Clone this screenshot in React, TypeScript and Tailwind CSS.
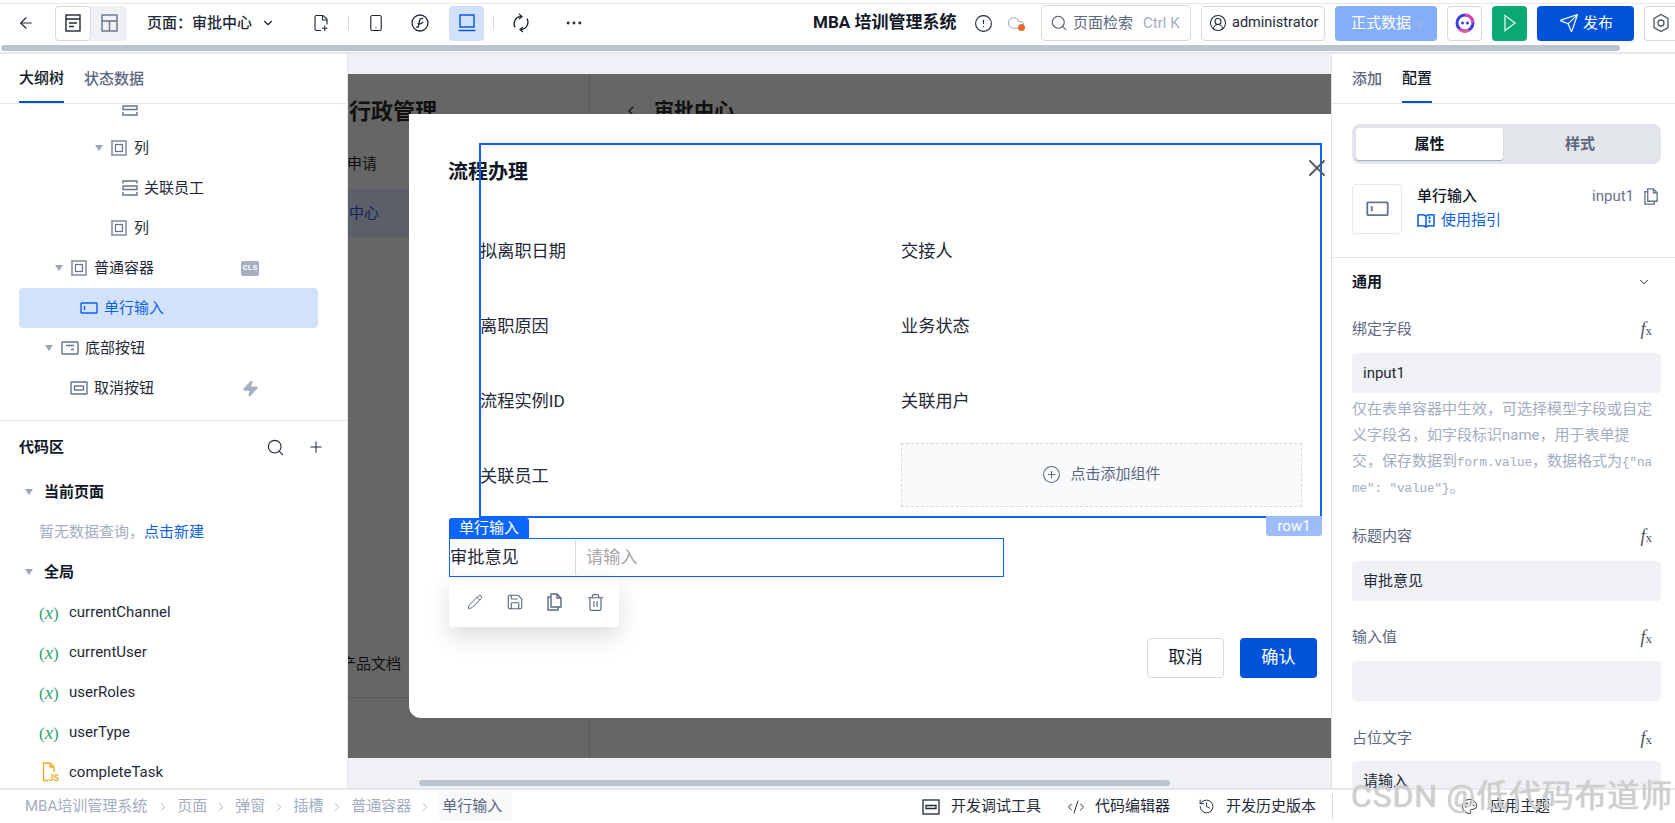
import type { ReactNode } from "react";
import {
  ArrowLeft,
  ChevronDown,
  ChevronRight,
  ChevronLeft,
  CircleAlert,
  CirclePlus,
  CircleUserRound,
  Cloud,
  CodeXml,
  Ellipsis,
  FilePlus2,
  History,
  Palette,
  Pencil,
  Plus,
  Save,
  Search,
  Send,
  Smartphone,
  Trash2,
  X,
  Zap,
} from "lucide-react";

const Caret = () => (
  <svg width="8" height="6" viewBox="0 0 8 6" className="mr-[8px] shrink-0">
    <path d="M0 0h8L4 6z" fill="#9aa5b8" />
  </svg>
);

const ColIcon = () => (
  <svg width="16" height="16" viewBox="0 0 16 16" fill="none" className="shrink-0">
    <rect x="1" y="1" width="14" height="14" stroke="#8592a8" strokeWidth="1.6" />
    <rect x="4.5" y="4.5" width="7" height="7" stroke="#66738c" strokeWidth="1.2" />
  </svg>
);

const TitleIcon = () => (
  <svg width="16" height="16" viewBox="0 0 16 16" fill="none" stroke="#66738c" strokeWidth="1.4" className="shrink-0">
    <path d="M1 3.5V1h14v2.5M1 6h14v3.5H1zM1 12v3h14v-3" />
  </svg>
);

const InputIcon = ({ color = "#66738c", size = 18 }: { color?: string; size?: number }) => (
  <svg width={size} height={size * 0.67} viewBox="0 0 18 12" fill="none" stroke={color} strokeWidth="1.4" className="shrink-0">
    <rect x="1" y="1" width="16" height="10" rx="0.5" />
    <path d="M4.5 4v4" />
  </svg>
);

const FooterIcon = () => (
  <svg width="18" height="14" viewBox="0 0 18 14" fill="none" stroke="#66738c" strokeWidth="1.4" className="shrink-0">
    <rect x="1" y="1" width="16" height="12" rx="0.5" />
    <path d="M5 4.5h8M10 8.5h3" />
  </svg>
);

const ButtonIcon = () => (
  <svg width="18" height="14" viewBox="0 0 18 14" fill="none" stroke="#66738c" strokeWidth="1.4" className="shrink-0">
    <rect x="1" y="1" width="16" height="12" rx="0.5" />
    <rect x="4.5" y="5" width="9" height="4" />
  </svg>
);

const FxMark = () => (
  <span className="font-['Liberation_Serif'] text-[18px] leading-none text-[#4b5563] italic">
    f<span className="text-[13px] not-italic">x</span>
  </span>
);

const VarMark = () => (
  <span className="w-[20px] shrink-0 font-['Liberation_Serif'] text-[17px] leading-none whitespace-nowrap text-[#2ba471]">
    (<span className="text-[19px] italic">x</span>)
  </span>
);

const FileCopy = ({ size = 18, color = "#66738c" }: { size?: number; color?: string }) => (
  <svg width={size} height={size} viewBox="0 0 18 18" fill="none" stroke={color} strokeWidth="1.4">
    <path d="M5 1h6l4 4v9H5zM11 1v4h4M5 4H2v13h10v-3" />
  </svg>
);

const TreeRow = ({ className, children, badge }: { className: string; children: ReactNode; badge?: ReactNode }) => (
  <div className={`flex h-10 w-[299px] items-center rounded-[4px] ${className}`}>
    {children}
    {badge && <span className="mr-[59px] ml-auto flex">{badge}</span>}
  </div>
);

const FieldLabel = ({ text }: { text: string }) => (
  <div className="flex h-10 items-center justify-between pr-[9px] text-[15px] text-[#5b6880]">
    <span>{text}</span>
    <FxMark />
  </div>
);

const Field = ({ children, className }: { children?: ReactNode; className: string }) => (
  <div className={`flex h-10 items-center rounded-[4px] bg-[#f0f1f5] px-[11px] text-[15px] text-[#1f2937] ${className}`}>{children}</div>
);

const Crumb = ({ text, dark }: { text: string; dark?: boolean }) => (
  <span className={dark ? "flex h-[29px] items-center bg-[#f7f8fa] pr-[10px] pl-[3px] text-[#5b6880]" : "text-[#a2adbf]"}>{text}</span>
);

const Sep = () => <ChevronRight size={14} strokeWidth={1.4} className="mx-[7px] shrink-0 text-[#a2adbf]" />;

const App = () => {
  return (
    <div className="relative flex h-[823px] w-[1675px] flex-col overflow-hidden bg-white font-['Roboto','Noto_Sans_CJK_SC',sans-serif] text-[15px] text-[#1f2937]">
      {/* 상단 툴바 */}
      <header className="h-[54px] shrink-0 border-b-2 border-[#e6e8ec] pt-[3px]">
        <div className="flex h-[39px] items-center border-t border-[#e6e8ec]">
          <ArrowLeft size={18} strokeWidth={1.5} className="ml-[17px] shrink-0" />
          <div className="ml-[20px] flex h-[35px] w-[72px] shrink-0 rounded-[4px] bg-[#f0f1f5]">
            <div className="flex w-[36px] items-center justify-center rounded-[4px] border border-[#d5d9e0] bg-white">
              <svg width="16" height="18" viewBox="0 0 16 18" fill="none" stroke="#1f2937" strokeWidth="1.4">
                <rect x="1" y="1" width="14" height="16" />
                <path d="M1 5h14M4 9h8M4 12.5h5" />
              </svg>
            </div>
            <div className="flex flex-1 items-center justify-center">
              <svg width="17" height="18" viewBox="0 0 17 18" fill="none" stroke="#66738c" strokeWidth="1.4">
                <rect x="1" y="1" width="15" height="16" />
                <path d="M1 7h15M8.5 7v10" />
              </svg>
            </div>
          </div>
          <span className="ml-[20px] w-[105px] shrink-0 font-medium whitespace-nowrap">页面：审批中心</span>
          <ChevronDown size={14} className="ml-[9px] shrink-0" />
          <FilePlus2 size={18} strokeWidth={1.5} className="ml-[37px] shrink-0" />
          <span className="ml-[18px] h-[14px] w-px shrink-0 bg-[#d5d9e0]" />
          <Smartphone size={18} strokeWidth={1.5} className="ml-[18px] shrink-0" />
          <svg width="18" height="18" viewBox="0 0 18 18" fill="none" stroke="#1f2937" strokeWidth="1.3" className="ml-[26px] shrink-0">
            <circle cx="9" cy="9" r="8" />
            <path d="M12 5c-2-1.500-3.200 0-3.500 2L7.500 12c-.3 1.500-1.500 1.500-2.200.8M6.500 9.500c2 .8 5 .2 5.500-1.800" />
          </svg>
          <div className="ml-[20px] flex h-[35px] w-[35px] shrink-0 items-center justify-center rounded-[4px] bg-[#d2e2fb]">
            <svg width="18" height="18" viewBox="0 0 18 18" fill="none" stroke="#0052d9" strokeWidth="1.4">
              <rect x="2" y="1" width="14" height="12" />
              <path d="M0.500 16.500h17" />
            </svg>
          </div>
          <span className="ml-[9px] h-[14px] w-px shrink-0 bg-[#d5d9e0]" />
          <svg width="18" height="20" viewBox="0 0 18 20" fill="none" stroke="#1f2937" strokeWidth="1.3" className="ml-[18px] shrink-0">
            <path d="M3 14.500C.8 10.500 2.500 4 9 3.500M15 5.500c2.200 4 .5 10.500-6 11" />
            <path d="M7 1l3 2.500L7 6M11 14l-3 2.500 3 2.500" />
          </svg>
          <Ellipsis size={20} strokeWidth={1.5} className="ml-[34px] shrink-0" />
          <div className="flex-1" />
          <span className="w-[146px] shrink-0 text-[17px] font-bold whitespace-nowrap text-[#111827]">MBA 培训管理系统</span>
          <CircleAlert size={19} strokeWidth={1.4} className="ml-[15px] shrink-0" />
          <span className="relative ml-[14px] shrink-0">
            <Cloud size={18} strokeWidth={1.4} className="text-[#a2adbf]" />
            <span className="absolute right-0 bottom-[1px] h-[7px] w-[7px] rounded-full bg-[#e8692a]" />
          </span>
          <div className="ml-[16px] flex h-[36px] w-[150px] shrink-0 items-center rounded-[4px] border border-[#d5d9e0] pl-[8px]">
            <Search size={18} strokeWidth={1.4} className="text-[#4b5563]" />
            <span className="ml-[5px] whitespace-nowrap text-[#5b6880]">页面检索</span>
            <span className="ml-[10px] whitespace-nowrap text-[#a2adbf]">Ctrl K</span>
          </div>
          <div className="ml-[10px] flex h-[35px] w-[124px] shrink-0 items-center rounded-[4px] border border-[#d5d9e0] pl-[7px]">
            <CircleUserRound size={18} strokeWidth={1.4} />
            <span className="ml-[5px] text-[14.5px] whitespace-nowrap">administrator</span>
          </div>
          <div className="ml-[10px] flex h-[35px] w-[102px] shrink-0 items-center rounded-[4px] bg-[#84aff8] pl-[16px] text-white">
            <span className="whitespace-nowrap">正式数据</span>
            <ChevronDown size={13} className="ml-[3px] text-[#a9b9d4]" />
          </div>
          <div className="ml-[10px] flex h-[35px] w-[35px] shrink-0 items-center justify-center rounded-[4px] border border-[#d5d9e0]">
            <svg width="20" height="20" viewBox="0 0 20 20" fill="none">
              <circle cx="10" cy="10" r="8" stroke="#3f3fe0" strokeWidth="3" />
              <path d="M10 2a8 8 0 0 1 8 8" stroke="#d946a8" strokeWidth="3" />
              <path d="M4 16a8 8 0 0 0 10 1" stroke="#e05a9a" strokeWidth="3" />
              <circle cx="7.500" cy="10" r="1.500" fill="#3f3fe0" />
              <circle cx="12.500" cy="10" r="1.500" fill="#3f3fe0" />
            </svg>
          </div>
          <div className="ml-[10px] flex h-[35px] w-[35px] shrink-0 items-center justify-center rounded-[4px] bg-[#0aa874]">
            <svg width="14" height="18" viewBox="0 0 14 18" fill="none" stroke="#d5f5e6" strokeWidth="1.4">
              <path d="M2 1.500 12 9 2 16.500z" />
            </svg>
          </div>
          <div className="ml-[10px] flex h-[35px] w-[97px] shrink-0 items-center rounded-[4px] bg-[#0052d9] pl-[22px] text-white">
            <Send size={20} strokeWidth={1.4} />
            <span className="ml-[4px] whitespace-nowrap">发布</span>
          </div>
          <div className="ml-[10px] flex h-[35px] w-[31px] shrink-0 items-center rounded-l-[4px] border border-r-0 border-[#d5d9e0] pl-[7px]">
            <svg width="18" height="20" viewBox="0 0 18 20" fill="none" stroke="#4b5563" strokeWidth="1.3">
              <path d="M9 1.500 16 5.500v9L9 18.500 2 14.500v-9z" />
              <circle cx="9" cy="10" r="3" />
            </svg>
          </div>
        </div>
        <div className="mt-[3px] mr-[55px] ml-[1px] h-[6px] rounded-[3px] bg-[#bac3cf]" />
      </header>

      <div className="flex min-h-0 flex-1">
        {/* 왼쪽 패널 */}
        <aside className="flex w-[348px] shrink-0 flex-col border-r border-[#e6e8ec]">
          <div className="flex h-[50px] shrink-0 gap-[20px] border-b border-[#e6e8ec] pl-[19px]">
            <span className="flex h-[49px] items-center border-b-2 border-[#0052d9] pt-[2px] font-medium text-[#111827]">大纲树</span>
            <span className="flex h-[49px] items-center pt-[2px] font-medium text-[#5b6880]">状态数据</span>
          </div>
          <div className="h-[317px] shrink-0 overflow-hidden border-b border-[#e0e2e7] pl-[19px]">
            <div className="-mt-[16px]">
              <TreeRow className="pl-[103px]"><TitleIcon /></TreeRow>
              <TreeRow className="pl-[76px]"><Caret /><ColIcon /><span className="ml-[7px]">列</span></TreeRow>
              <TreeRow className="pl-[103px]"><TitleIcon /><span className="ml-[6px]">关联员工</span></TreeRow>
              <TreeRow className="pl-[92px]"><ColIcon /><span className="ml-[7px]">列</span></TreeRow>
              <TreeRow
                className="pl-[36px]"
                badge={<span className="flex h-[15px] w-[18px] items-center justify-center rounded-[2px] bg-[#a6b0c3] font-['Liberation_Mono'] text-[8px] font-bold text-white">CLS</span>}
              >
                <Caret /><ColIcon /><span className="ml-[7px]">普通容器</span>
              </TreeRow>
              <TreeRow className="bg-[#d2e2fb] pl-[61px] text-[#0f62e6]"><InputIcon color="#0f62e6" /><span className="ml-[6px]">单行输入</span></TreeRow>
              <TreeRow className="pl-[26px]"><Caret /><FooterIcon /><span className="ml-[6px]">底部按钮</span></TreeRow>
              <TreeRow className="pl-[51px]" badge={<Zap size={17} fill="#a6b0c3" stroke="#a6b0c3" />}>
                <ButtonIcon /><span className="ml-[6px]">取消按钮</span>
              </TreeRow>
            </div>
          </div>
          <div className="min-h-0 flex-1 overflow-hidden pt-[6px]">
            <div className="flex h-10 items-center justify-between pr-[22px] pl-[19px]">
              <span className="font-bold text-[#111827]">代码区</span>
              <span className="flex items-center gap-[22px]">
                <Search size={19} strokeWidth={1.4} />
                <Plus size={18} strokeWidth={1.4} />
              </span>
            </div>
            <div className="mt-[5px] flex h-10 items-center pl-[25px] font-bold text-[#111827]"><Caret /><span className="ml-[3px]">当前页面</span></div>
            <div className="flex h-10 items-center pl-[39px] text-[#a2adbf]">暂无数据查询，<span className="text-[#0f62e6]">点击新建</span></div>
            <div className="flex h-10 items-center pl-[25px] font-bold text-[#111827]"><Caret /><span className="ml-[3px]">全局</span></div>
            {["currentChannel", "currentUser", "userRoles", "userType"].map((name) => (
              <div key={name} className="flex h-10 items-center pl-[39px]">
                <VarMark />
                <span className="ml-[10px]">{name}</span>
              </div>
            ))}
            <div className="flex h-10 items-center pl-[42px]">
              <svg width="17" height="20" viewBox="0 0 17 20" fill="none" stroke="#f5a623" strokeWidth="1.3" className="shrink-0">
                <path d="M6 18.500H1.500V1H8l4 4v5M8 1v4h4" />
                <text x="6.500" y="19" fontSize="9" fill="#f5a623" stroke="none" fontWeight="700">JS</text>
              </svg>
              <span className="ml-[10px]">completeTask</span>
            </div>
          </div>
        </aside>

        {/* 캔버스 */}
        <main className="relative min-w-0 flex-1 overflow-hidden bg-[#f0f1f5]">
          <div className="relative mt-[20px] flex h-[684px] overflow-hidden bg-[#666666] text-[#111]">
            <div className="w-[242px] shrink-0 border-r border-[#5a5a5a]">
              <div className="mt-[22px] h-[32px] pl-[1px] text-[22px] leading-[32px] font-bold whitespace-nowrap">行政管理</div>
              <div className="mt-[21px] -ml-[1px] h-[30px] leading-[30px]">申请</div>
              <div className="mt-[10px] flex h-[48px] items-center bg-[#5a5f68] pl-[1px] text-[#12245c]">中心</div>
              <div className="mt-[415px] -ml-[7px] h-[46px] border-b border-[#5a5a5a] text-[15px] leading-[24px] whitespace-nowrap">产品文档</div>
            </div>
            <div className="flex h-[40px] flex-1 items-start pt-[23px] pl-[33px]">
              <ChevronLeft size={16} strokeWidth={1.6} className="mt-[6px]" />
              <span className="ml-[15px] text-[20px] leading-[28px] font-bold whitespace-nowrap">审批中心</span>
            </div>

            {/* 弹窗 */}
            <div className="absolute top-[40px] left-[61px] h-[604px] w-[930px] rounded-bl-[12px] bg-white text-[#1f2937]">
              <div className="h-[100px] pt-[43px] pl-[39px] text-[20px] leading-[30px] font-bold text-[#111827]">流程办理</div>
              <div className="ml-[71px] grid w-[822px] grid-cols-[421px_401px] text-[17.2px]">
                {["拟离职日期", "交接人", "离职原因", "业务状态", "流程实例ID", "关联用户", "关联员工"].map((label) => (
                  <div key={label} className="flex h-[75px] items-center whitespace-nowrap">{label}</div>
                ))}
                <div className="-mt-[2px] flex h-[75px] items-center">
                  <div className="flex h-[64px] w-full items-center justify-center gap-[9px] border border-dashed border-[#d5d9e0] bg-[#f9fafc] text-[15px] text-[#5b6880]">
                    <CirclePlus size={19} strokeWidth={1.3} />
                    <span>点击添加组件</span>
                  </div>
                </div>
              </div>

              {/* 선택된 입력 */}
              <div className="relative mt-[4px] ml-[40px] w-[555px]">
                <div className="flex h-[20px] w-[80px] items-center justify-center rounded-t-[3px] bg-[#0a66ff] text-[15px] leading-none text-white">单行输入</div>
                <div className="flex h-[39px] items-center border border-[#0a66ff] text-[17.2px]">
                  <span className="w-[125px] shrink-0 pt-[1px] whitespace-nowrap">审批意见</span>
                  <span className="flex h-full flex-1 items-center rounded-l-[3px] border-l border-[#d5d9e0] pt-[1px] pl-[10px] text-[#a8a8a8]">请输入</span>
                </div>
                <div className="absolute top-full left-0 grid h-[50px] w-[170px] grid-cols-[40px_40px_40px_40px] place-items-center rounded-b-[4px] bg-white pl-[6px] text-[#5b6880] shadow-[0_10px_25px_rgba(0,0,0,0.14)]">
                  <Pencil size={16} strokeWidth={1.5} />
                  <Save size={18} strokeWidth={1.5} />
                  <FileCopy size={18} color="#5b6880" />
                  <Trash2 size={19} strokeWidth={1.5} />
                </div>
              </div>

              <div className="mt-[61px] flex w-[908px] justify-end gap-[16px] text-[17.2px]">
                <div className="flex h-10 w-[77px] items-center justify-center rounded-[4px] border border-[#d5d9e0] bg-white text-[#111827]">取消</div>
                <div className="flex h-10 w-[77px] items-center justify-center rounded-[4px] bg-[#0052d9] text-white">确认</div>
              </div>

              {/* 선택 테두리 */}
              <div className="absolute top-[29px] left-[70px] h-[375px] w-[843px] border-2 border-[#0a66ff]">
                <span className="absolute top-full -right-[2px] flex h-[20px] w-[56px] items-center justify-center rounded-b-[3px] bg-[#9cbdf9] text-[15px] text-white">row1</span>
              </div>
              <X size={28} strokeWidth={1.6} className="absolute top-[40px] left-[894px] text-[#5a5a5a]" />
            </div>
          </div>
          <div className="absolute right-[161px] bottom-[2px] left-[71px] h-[6px] rounded-[3px] bg-[#bac3cf]" />
        </main>

        {/* 오른쪽 패널 */}
        <aside className="w-[344px] shrink-0 overflow-hidden border-l border-[#e0e2e7]">
          <div className="flex h-[50px] gap-[20px] border-b border-[#e6e8ec] pl-[20px]">
            <span className="flex h-[49px] items-center pt-[2px] font-medium text-[#5b6880]">添加</span>
            <span className="flex h-[49px] items-center border-b-2 border-[#0052d9] pt-[2px] font-medium text-[#111827]">配置</span>
          </div>
          <div className="mx-[20px] mt-[20px] flex h-[40px] w-[309px] rounded-[8px] bg-[#e2e5ea] p-[4px] font-bold">
            <span className="flex w-[147px] items-center justify-center rounded-[3px] bg-white text-[#111827] shadow-[0_1px_1px_rgba(100,116,139,0.5)]">属性</span>
            <span className="flex flex-1 items-center justify-center text-[#5b6880]">样式</span>
          </div>
          <div className="mt-[20px] flex h-[50px] pr-[15px] pl-[20px]">
            <div className="flex h-[50px] w-[50px] items-center justify-center rounded-[4px] border border-[#e6e8ec]">
              <InputIcon size={23} />
            </div>
            <div className="ml-[15px] flex-1">
              <div className="h-[24px] leading-[24px] font-medium text-[#111827]">单行输入</div>
              <div className="flex h-[25px] items-center text-[#0f62e6]">
                <svg width="18" height="16" viewBox="0 0 18 16" fill="none" stroke="#0f62e6" strokeWidth="1.6" className="mr-[6px]">
                  <path d="M9 3C7 1.500 4 1.500 1 2v11c3-.5 6-.5 8 1 2-1.500 5-1.500 8-1V2c-3-.5-6-.5-8 1zM9 3v11M12.500 7v3" />
                  <circle cx="12.500" cy="4.800" r=".5" />
                </svg>
                使用指引
              </div>
            </div>
            <div className="flex h-[24px] items-center gap-[9px] text-[#66738c]">
              <span>input1</span>
              <FileCopy size={17} />
            </div>
          </div>
          <div className="mt-[23px] border-t border-[#e6e8ec]" />
          <div className="flex h-[48px] items-center justify-between pr-[24px] pl-[20px] font-bold text-[#111827]">
            <span>通用</span>
            <ChevronDown size={14} strokeWidth={1.6} />
          </div>
          <div className="mt-[3px] ml-[20px] w-[309px]">
            <FieldLabel text="绑定字段" />
            <Field className="mt-[4px]">input1</Field>
            <p className="mt-[3px] text-[15px] leading-[26px] whitespace-nowrap text-[#a2adbf]">
              仅在表单容器中生效，可选择模型字段或自定<br />
              义字段名，如字段标识name，用于表单提<br />
              交，保存数据到<span className="font-['Liberation_Mono'] text-[12.5px] leading-none">form.value</span>，数据格式为<span className="font-['Liberation_Mono'] text-[12.5px] leading-none">{'{"na'}</span><br />
              <span className="font-['Liberation_Mono'] text-[12.5px] leading-none">{'me": "value"}'}</span>。
            </p>
            <div className="mt-[16px]"><FieldLabel text="标题内容" /></div>
            <Field className="mt-[5px]">审批意见</Field>
            <div className="mt-[16px]"><FieldLabel text="输入值" /></div>
            <Field className="mt-[4px]" />
            <div className="mt-[17px]"><FieldLabel text="占位文字" /></div>
            <Field className="mt-[3px]">请输入</Field>
          </div>
        </aside>
      </div>

      {/* 하단 상태바 */}
      <footer className="relative flex h-[35px] shrink-0 items-center border-t-2 border-[#e6e8ec]">
        <div className="flex w-[1332px] shrink-0 items-center pr-[16px] pl-[25px] whitespace-nowrap">
          <span className="mr-[2px]"><Crumb text="MBA培训管理系统" /></span><Sep />
          <Crumb text="页面" /><Sep />
          <Crumb text="弹窗" /><Sep />
          <Crumb text="插槽" /><Sep />
          <Crumb text="普通容器" /><Sep />
          <Crumb text="单行输入" dark />
          <div className="ml-auto flex items-center text-[#1f2937]">
            <svg width="18" height="16" viewBox="0 0 18 16" fill="none" stroke="#1f2937" strokeWidth="1.3" className="mr-[11px]">
              <rect x="1" y="1" width="16" height="14" />
              <path d="M4 6.500h10v3H4z" />
            </svg>
            <span>开发调试工具</span>
            <CodeXml size={18} strokeWidth={1.3} className="mr-[10px] ml-[26px]" />
            <span>代码编辑器</span>
            <History size={17} strokeWidth={1.3} className="mr-[11px] ml-[28px]" />
            <span>开发历史版本</span>
          </div>
        </div>
        <div className="flex h-[25px] flex-1 items-center border-l border-[#d5d9e0] pl-[128px] whitespace-nowrap">
          <Palette size={17} strokeWidth={1.3} className="mr-[12px] shrink-0" />
          <span>应用主题</span>
        </div>
      </footer>

      {/* 水印 */}
      <div className="pointer-events-none absolute top-[778px] left-[1351px] text-[32px] leading-[36px] tracking-[0.8px] whitespace-nowrap text-[#e2e2e2]/70 [text-shadow:0_0_1px_#a0a0a0]">
        CSDN @低代码布道师
      </div>
    </div>
  );
};

export default App;
